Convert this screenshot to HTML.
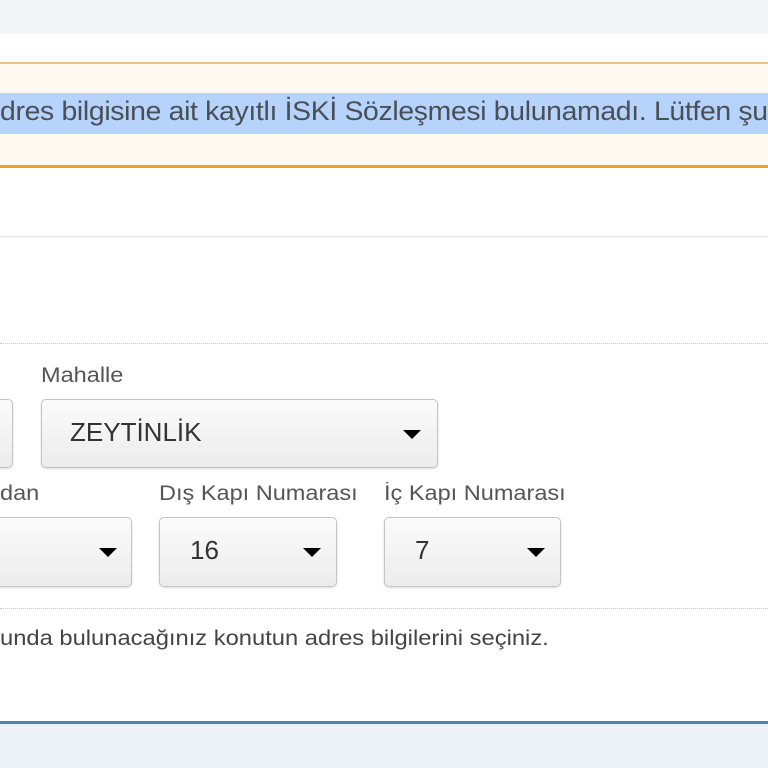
<!DOCTYPE html>
<html><head><meta charset="utf-8"><style>
body{margin:0;width:768px;height:768px;overflow:hidden;background:#fff;font-family:"Liberation Sans",sans-serif;color:#444;position:relative}
.a{position:absolute}
.sel{position:absolute;border:1px solid #c4c4c4;border-radius:5px;background:linear-gradient(#fbfbfb,#ececec);box-shadow:0 1px 2px rgba(0,0,0,.15);box-sizing:border-box;font-size:26px;color:#333}
.sel span{position:absolute;left:30px;top:17px}
.car{position:absolute;top:50%;margin-top:-4px;width:0;height:0;border-left:9px solid transparent;border-right:9px solid transparent;border-top:9px solid #000}
.lbl{position:absolute;font-size:21px;color:#555;transform:scaleX(1.12);transform-origin:left;white-space:nowrap}
</style></head><body>
<div class="a" style="left:0;top:0;width:768px;height:34px;background:#f3f4f6"></div>
<div class="a" style="left:0;top:62px;width:768px;height:101px;background:#fffaf1;border-top:2px solid #efc57a;border-bottom:3px solid #f0a51e"></div>
<div class="a" style="left:0;top:93px;width:768px;height:41px;background:#b6d3fb"></div>
<div class="a" style="left:0;top:96px;white-space:nowrap;font-size:27px;color:#4a4f57;letter-spacing:-0.3px;transform:scaleX(1.05);transform-origin:left">dres bilgisine ait kayıtlı İSKİ Sözleşmesi bulunamadı. Lütfen şu</div>
<div class="a" style="left:0;top:236px;width:768px;height:1px;background:#e6e6e6"></div>
<div class="a" style="left:0;top:343px;width:768px;border-top:1px dotted #c8c8c8"></div>
<div class="lbl" style="left:41px;top:364px">Mahalle</div>
<div class="sel" style="left:-20px;top:399px;width:33px;height:69px"></div>
<div class="sel" style="left:41px;top:399px;width:397px;height:69px"><span style="left:28px">ZEYTİNLİK</span><div class="car" style="right:16px"></div></div>
<div class="lbl" style="left:0;top:482px">dan</div>
<div class="lbl" style="left:159px;top:482px">Dış Kapı Numarası</div>
<div class="lbl" style="left:384px;top:482px">İç Kapı Numarası</div>
<div class="sel" style="left:-20px;top:517px;width:152px;height:70px"><div class="car" style="right:14px"></div></div>
<div class="sel" style="left:159px;top:517px;width:178px;height:70px"><span>16</span><div class="car" style="right:15px"></div></div>
<div class="sel" style="left:384px;top:517px;width:177px;height:70px"><span>7</span><div class="car" style="right:15px"></div></div>
<div class="a" style="left:0;top:608px;width:768px;border-top:1px dotted #c8c8c8"></div>
<div class="a" style="left:0;top:627px;font-size:21px;color:#444;white-space:nowrap;transform:scaleX(1.13);transform-origin:left">unda bulunacağınız konutun adres bilgilerini seçiniz.</div>
<div class="a" style="left:0;top:721px;width:768px;height:3px;background:#4a86b6"></div>
<div class="a" style="left:0;top:724px;width:768px;height:44px;background:#edf1f8"></div>
</body></html>
